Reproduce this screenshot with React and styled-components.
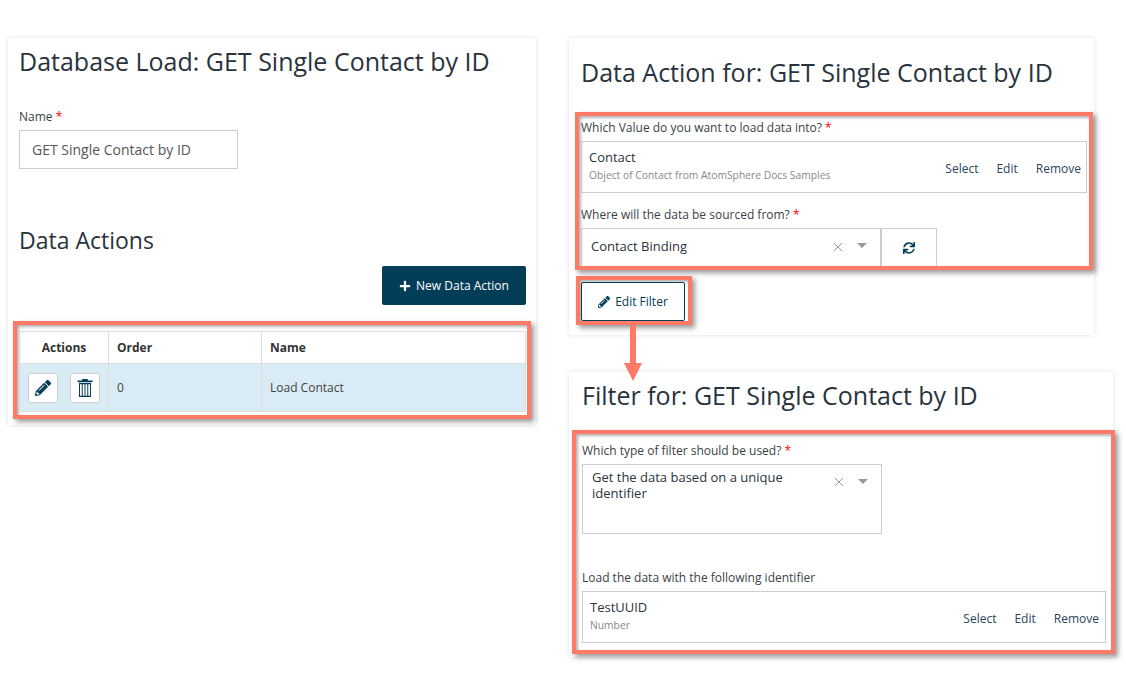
import React from 'react';
import styled, { createGlobalStyle } from 'styled-components';
import { FaPencilAlt, FaPlus, FaSync } from 'react-icons/fa';

const Global = createGlobalStyle`
  html, body {
    margin: 0;
    background: #fff;
    font-family: "Open Sans", "Liberation Sans", sans-serif;
    color: #333;
  }
  * { box-sizing: border-box; }
`;

const Page = styled.div`
  position: relative;
  width: 1126px;
  height: 687px;
  overflow: hidden;
  display: flex;
  align-items: flex-start;
  padding: 38px 0 0 8px;
  gap: 33px;
`;

const Column = styled.div`
  display: flex;
  flex-direction: column;
  align-items: flex-start;
  gap: 37px;
`;

const Card = styled.section`
  width: ${p => p.$width}px;
  height: ${p => p.$height}px;
  padding: ${p => p.$padding};
  background: #fff;
  box-shadow: 0 0 5px rgba(0, 0, 0, 0.12);
`;

const Title = styled.h1`
  margin: ${p => p.$margin || 0};
  font-size: 25px;
  line-height: 34px;
  font-weight: 400;
  color: #29333d;
  white-space: nowrap;
`;

const Label = styled.div`
  margin-top: ${p => p.$top || 0}px;
  font-size: 12px;
  line-height: 16px;
  color: #3b3f46;
  white-space: nowrap;
  b { color: #f00; font-weight: 400; }
`;

const TextInput = styled.div`
  width: 219px;
  height: 39px;
  margin-top: 5px;
  padding: 0 12px;
  display: flex;
  align-items: center;
  border: 1px solid #ccc;
  font-size: 14px;
  color: #555;
`;

const SubTitle = styled.h2`
  margin: 55px 0 0;
  font-size: 23px;
  line-height: 32px;
  font-weight: 400;
  color: #29333d;
`;

const ToolRow = styled.div`
  display: flex;
  justify-content: flex-end;
  margin: 10px 5px 16px 0;
`;

const PrimaryButton = styled.button`
  width: 144px;
  height: 39px;
  display: flex;
  align-items: center;
  justify-content: center;
  gap: 5px;
  border: 0;
  border-radius: 2px;
  background: #033d58;
  color: #fff;
  font: 400 12px "Open Sans", sans-serif;
`;

const Highlight = styled.div`
  width: ${p => p.$width}px;
  height: ${p => p.$height}px;
  margin: ${p => p.$margin || 0};
  padding: ${p => p.$padding || '0'};
  border: 4px solid #ff7a66;
  box-shadow: 3px 3px 5px rgba(0, 0, 0, 0.4), inset 2px 2px 3px rgba(0, 0, 0, 0.3);
`;

const Table = styled.div`
  display: grid;
  grid-template-columns: 89px 153px 1fr;
  grid-template-rows: 32px 47px;
  border: 1px solid #ddd;
  border-width: 1px 0 1px 1px;
  font-size: 12px;
`;

const HeadCell = styled.div`
  display: flex;
  align-items: center;
  justify-content: ${p => (p.$center ? 'center' : 'flex-start')};
  padding: 0 8px;
  border-right: 1px solid #ddd;
  border-bottom: 1px solid #ddd;
  font-weight: 700;
  color: #333;
`;

const Cell = styled.div`
  display: flex;
  align-items: center;
  gap: 12px;
  padding: 0 8px;
  background: #d9ebf5;
  border-right: 1px solid #ddd;
  color: #444;
`;

const IconButton = styled.button`
  width: 30px;
  height: 30px;
  padding: 0;
  display: flex;
  align-items: center;
  justify-content: center;
  background: #fff;
  border: 1px solid #ccc;
  border-radius: 2px;
  color: #033d58;
  font-size: 16px;
`;

const ObjectBox = styled.div`
  height: 52px;
  margin-top: 5px;
  padding: 0 ${p => p.$right || 5}px 0 7px;
  display: flex;
  align-items: center;
  justify-content: space-between;
  border: 1px solid #ccc;
`;

const ObjectText = styled.div`
  padding-bottom: 5px;
`;

const ObjectName = styled.div`
  font-size: 13px;
  line-height: 18px;
  color: #29333d;
`;

const ObjectNote = styled.div`
  font-size: 10.3px;
  line-height: 14px;
  margin-top: 2px;
  color: #888;
`;

const Links = styled.div`
  display: flex;
  gap: 18px;
  margin-top: 2px;
  font-size: 12px;
  color: #29465c;
`;

const SelectRow = styled.div`
  display: flex;
  margin-top: 5px;
`;

const SelectBox = styled.div`
  position: relative;
  width: ${p => p.$width}px;
  height: ${p => p.$height}px;
  margin-top: ${p => p.$top || 0}px;
  padding: ${p => p.$padding};
  border: 1px solid #ccc;
  border-bottom-width: ${p => (p.$open ? 0 : 1)}px;
  font-size: 13px;
  line-height: 16px;
  color: #29333d;
`;

const ClearIcon = styled.svg`
  position: absolute;
  right: 37px;
  top: ${p => p.$top}px;
  width: 10px;
  height: 10px;
  stroke: #999;
  stroke-width: 1;
`;

const Caret = styled.span`
  position: absolute;
  right: 13px;
  top: ${p => p.$top}px;
  border-style: solid;
  border-width: 5px 5px 0;
  border-color: #999 transparent transparent;
`;

const RefreshButton = styled.div`
  width: 57px;
  height: 38px;
  display: flex;
  align-items: center;
  justify-content: center;
  margin-left: -1px;
  border: 1px solid #ccc;
  border-bottom: 0;
  border-left-width: 2px;
  color: #033d58;
  font-size: 12px;
`;

const OutlineButton = styled.button`
  width: 104px;
  height: 39px;
  display: flex;
  align-items: center;
  justify-content: center;
  gap: 5px;
  background: #fff;
  border: 1px solid #033d58;
  border-radius: 2px;
  color: #033d58;
  font: 400 12px "Open Sans", sans-serif;
`;

const Arrow = styled.svg`
  position: absolute;
  left: 624px;
  top: 325px;
  width: 18px;
  height: 56px;
`;

const Trash = () => (
  <svg width="16" height="18" viewBox="0 0 16 18" fill="#033d58">
    <path d="M5.5 0h5l.7 1.6H15.5v1.6H.5V1.6h4.3z" />
    <path
      d="M2 4h12v14H2zM3 5.2v11.6h1.75V5.2zm2.75 0v11.6H7.5V5.2zm2.75 0v11.6h1.75V5.2zm2.75 0v11.6H13V5.2z"
      fillRule="evenodd"
    />
  </svg>
);

const Clear = ({ top }) => (
  <ClearIcon $top={top} viewBox="0 0 10 10">
    <path d="M1 1l8 8M9 1L1 9" />
  </ClearIcon>
);

const Required = () => <b>*</b>;

const ObjectLinks = () => (
  <Links>
    <span>Select</span>
    <span>Edit</span>
    <span>Remove</span>
  </Links>
);

export default function App() {
  return (
    <Page>
      <Global />
      <Card $width={528} $height={387} $padding="6px 5px 0 11px">
        <Title>Database Load: GET Single Contact by ID</Title>
        <Label $top={31}>Name <Required /></Label>
        <TextInput>GET Single Contact by ID</TextInput>
        <SubTitle>Data Actions</SubTitle>
        <ToolRow>
          <PrimaryButton><FaPlus size={12} /> New Data Action</PrimaryButton>
        </ToolRow>
        <Highlight $width={518} $height={98} $margin="0 0 0 -6px" $padding="6px 1px 0 2px">
          <Table>
            <HeadCell $center>Actions</HeadCell>
            <HeadCell>Order</HeadCell>
            <HeadCell>Name</HeadCell>
            <Cell>
              <IconButton><FaPencilAlt /></IconButton>
              <IconButton><Trash /></IconButton>
            </Cell>
            <Cell>0</Cell>
            <Cell>Load Contact</Cell>
          </Table>
        </Highlight>
      </Card>
      <Column>
        <Card $width={525} $height={297} $padding="17px 0 0 6px">
          <Title $margin="0 0 0 6px">Data Action for: GET Single Contact by ID</Title>
          <Highlight $width={518} $height={158} $margin="23px 0 0 0" $padding="4px 2px 0 2px">
            <Label>Which Value do you want to load data into? <Required /></Label>
            <ObjectBox>
              <ObjectText>
                <ObjectName>Contact</ObjectName>
                <ObjectNote>Object of Contact from AtomSphere Docs Samples</ObjectNote>
              </ObjectText>
              <ObjectLinks />
            </ObjectBox>
            <Label $top={14}>Where will the data be sourced from? <Required /></Label>
            <SelectRow>
              <SelectBox $width={300} $height={38} $padding="9px 9px" $open>
                Contact Binding
                <Clear top={13} />
                <Caret $top={14} />
              </SelectBox>
              <RefreshButton><FaSync /></RefreshButton>
            </SelectRow>
          </Highlight>
          <Highlight $width={116} $height={49} $margin="6px 0 0 1px" $padding="2px 1px 0">
            <OutlineButton><FaPencilAlt size={12} /> Edit Filter</OutlineButton>
          </Highlight>
        </Card>
        <Card $width={544} $height={285} $padding="6px 0 0 3px">
          <Title $margin="0 0 0 10px">Filter for: GET Single Contact by ID</Title>
          <Highlight $width={543} $height={224} $margin="18px 0 0 0" $padding="9px 5px 0 6px">
            <Label>Which type of filter should be used? <Required /></Label>
            <SelectBox $width={300} $height={70} $padding="4px 60px 0 9px" $top={5}>
              Get the data based on a unique identifier
              <Clear top={12} />
              <Caret $top={14} />
            </SelectBox>
            <Label $top={36}>Load the data with the following identifier</Label>
            <ObjectBox $right={6}>
              <ObjectText>
                <ObjectName>TestUUID</ObjectName>
                <ObjectNote>Number</ObjectNote>
              </ObjectText>
              <ObjectLinks />
            </ObjectBox>
          </Highlight>
        </Card>
      </Column>
      <Arrow viewBox="0 0 18 56">
        <path d="M6 0h6v38h6L9 56 0 38h6z" fill="#ff7a66" />
      </Arrow>
    </Page>
  );
}
